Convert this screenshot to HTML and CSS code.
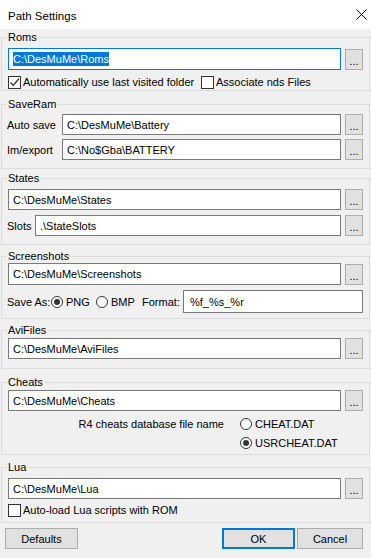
FILE: index.html
```html
<!DOCTYPE html>
<html lang="en">
<head>
    <meta charset="UTF-8">
    <title>Path Settings</title>
    <link rel="stylesheet" href="styles.css">
</head>
<body>

    <!-- Title bar -->
    <div class="titlebar">
        <span class="title">Path Settings</span>
        <svg class="close" width="11" height="11" viewBox="0 0 11 11">
            <path d="M0.5 0.5 L10.5 10.5 M10.5 0.5 L0.5 10.5" stroke="#000" stroke-width="1" fill="none"/>
        </svg>
    </div>

    <div class="dialog">

        <!-- Roms -->
        <fieldset class="group g-roms">
            <legend>Roms</legend>
            <div class="path-row">
                <div class="edit focused tall"><span class="sel">C:\DesMuMe\Roms</span></div>
                <button class="browse">...</button>
            </div>
            <div class="check-row">
                <label class="check first"><span class="box"><svg width="11" height="11" viewBox="0 0 11 11"><path d="M1.5 5.5 L4.2 8.3 L10 1.8" stroke="#333" stroke-width="1.3" fill="none"/></svg></span>Automatically use last visited folder</label>
                <label class="check"><span class="box"></span>Associate nds Files</label>
            </div>
        </fieldset>

        <!-- SaveRam -->
        <fieldset class="group g-saveram">
            <legend>SaveRam</legend>
            <div class="path-row">
                <span class="row-label w-save">Auto save</span>
                <div class="edit">C:\DesMuMe\Battery</div>
                <button class="browse">...</button>
            </div>
            <div class="path-row">
                <span class="row-label w-save">Im/export</span>
                <div class="edit">C:\No$Gba\BATTERY</div>
                <button class="browse">...</button>
            </div>
        </fieldset>

        <!-- States -->
        <fieldset class="group g-states">
            <legend>States</legend>
            <div class="path-row">
                <div class="edit">C:\DesMuMe\States</div>
                <button class="browse">...</button>
            </div>
            <div class="path-row">
                <span class="row-label w-slots">Slots</span>
                <div class="edit">.\StateSlots</div>
                <button class="browse">...</button>
            </div>
        </fieldset>

        <!-- Screenshots -->
        <fieldset class="group g-shots">
            <legend>Screenshots</legend>
            <div class="path-row">
                <div class="edit tall">C:\DesMuMe\Screenshots</div>
                <button class="browse">...</button>
            </div>
            <div class="format-row">
                <span class="save-as">Save As:</span>
                <label class="opt opt-png"><span class="radio on"><span class="dot"></span></span>PNG</label>
                <label class="opt opt-bmp"><span class="radio"></span>BMP</label>
                <span class="format-label">Format:</span>
                <div class="edit format">%f_%s_%r</div>
            </div>
        </fieldset>

        <!-- AviFiles -->
        <fieldset class="group g-avi">
            <legend>AviFiles</legend>
            <div class="path-row">
                <div class="edit">C:\DesMuMe\AviFiles</div>
                <button class="browse">...</button>
            </div>
        </fieldset>

        <!-- Cheats -->
        <fieldset class="group g-cheats">
            <legend>Cheats</legend>
            <div class="path-row">
                <div class="edit">C:\DesMuMe\Cheats</div>
                <button class="browse">...</button>
            </div>
            <div class="cheat-grid">
                <span class="cheat-text">R4 cheats database file name</span>
                <label class="opt"><span class="radio"></span>CHEAT.DAT</label>
                <span></span>
                <label class="opt"><span class="radio on"><span class="dot"></span></span>USRCHEAT.DAT</label>
            </div>
        </fieldset>

        <!-- Lua -->
        <fieldset class="group g-lua">
            <legend>Lua</legend>
            <div class="path-row">
                <div class="edit">C:\DesMuMe\Lua</div>
                <button class="browse">...</button>
            </div>
            <div class="check-row">
                <label class="check"><span class="box"></span>Auto-load Lua scripts with ROM</label>
            </div>
        </fieldset>

        <!-- Buttons -->
        <div class="buttons">
            <button class="btn">Defaults</button>
            <span class="spacer"></span>
            <button class="btn default">OK</button>
            <button class="btn cancel">Cancel</button>
        </div>

    </div>

</body>
</html>
```

FILE: styles.css
```css
/* General Styles */
* {
    margin: 0;
    padding: 0;
    box-sizing: border-box;
    font-family: "Liberation Sans", Arial, sans-serif;
}
body {
    width: 371px;
    height: 558px;
    background: #f0f0f0;
    color: #000;
    font-size: 11px;
    overflow: hidden;
}

/* Title bar */
.titlebar {
    height: 29px;
    background: #fff;
    display: flex;
    align-items: center;
    justify-content: space-between;
    padding: 0 4px 0 8px;
}
.title {
    font-size: 11.5px;
    padding-top: 2px;
}

/* Group boxes */
.dialog {
    padding: 0 1px;
}
.group {
    border: 1px solid #dcdcdc;
    margin: 0;
    min-width: 0;
    padding: 0 6px;
}
.group legend {
    line-height: 14px;
    padding: 0 1px;
    margin-left: -1px;
}
.g-roms { margin-top: 1px; padding-top: 4px; padding-bottom: 0; }
.g-saveram { margin-top: 6px; padding-top: 3px; padding-bottom: 8px; }
.g-states { margin-top: 2px; padding-top: 4px; padding-bottom: 8px; }
.g-shots { margin-top: 4px; padding-top: 0; padding-bottom: 5px; }
.g-avi { margin-top: 4px; padding-top: 1px; padding-bottom: 9px; }
.g-cheats { margin-top: 6px; padding-top: 1px; padding-bottom: 3px; }
.g-lua { margin-top: 5px; padding-top: 4px; padding-bottom: 4px; }

.g-saveram .path-row + .path-row { margin-top: 4px; }
.g-states .path-row + .path-row { margin-top: 5px; }
.g-roms .check-row { margin-top: 4px; }
.g-lua .check-row { margin-top: 3px; }

/* Path rows */
.path-row {
    display: flex;
    align-items: center;
    gap: 4px;
}
.row-label {
    flex: none;
    margin-left: -1px;
}
.w-save { width: 51px; }
.w-slots { width: 24px; }

.edit {
    flex: 1;
    height: 21px;
    background: #fff;
    border: 1px solid #7a7a7a;
    padding: 0 4px;
    display: flex;
    align-items: center;
    white-space: nowrap;
    overflow: hidden;
}
.edit.tall { height: 22px; }
.edit.focused { border-color: #0078d7; }
.sel {
    background: #0078d7;
    color: #fff;
    line-height: 14px;
}

.browse {
    flex: none;
    width: 18px;
    height: 21px;
    background: #e1e1e1;
    border: 1px solid #adadad;
    font-size: 11px;
    line-height: 14px;
    padding-top: 3px;
    color: #000;
}

/* Checkboxes */
.check-row {
    display: flex;
    height: 16px;
    align-items: center;
}
.check {
    display: flex;
    align-items: center;
    gap: 2px;
}
.check.first { width: 193px; }
.box {
    width: 13px;
    height: 13px;
    border: 1px solid #333;
    background: #fff;
    display: flex;
    align-items: center;
    justify-content: center;
}

/* Radios */
.opt {
    display: flex;
    align-items: center;
    gap: 3px;
}
.radio {
    width: 12px;
    height: 12px;
    border: 1px solid #333;
    border-radius: 50%;
    background: #fff;
    display: flex;
    align-items: center;
    justify-content: center;
}
.dot {
    width: 6px;
    height: 6px;
    border-radius: 50%;
    background: #333;
}

/* Screenshot format row */
.format-row {
    display: flex;
    align-items: center;
    margin-top: 5px;
}
.save-as { width: 44px; margin-left: -1px; }
.opt-png { width: 45px; }
.opt-bmp { width: 46px; }
.format-label { width: 41px; }
.edit.format {
    height: 23px;
    padding-left: 6px;
}

/* Cheats radios */
.cheat-grid {
    display: grid;
    grid-template-columns: 216px 1fr;
    column-gap: 16px;
    row-gap: 3px;
    margin-top: 5px;
}
.cheat-grid > * { height: 16px; }
.cheat-text {
    justify-self: end;
    line-height: 16px;
}

/* Dialog buttons */
.buttons {
    display: flex;
    margin: 5px 7px 0 4px;
    gap: 2px;
}
.spacer { flex: 1; }
.btn {
    width: 73px;
    height: 21px;
    background: #e1e1e1;
    border: 1px solid #adadad;
    font-size: 11px;
    color: #000;
}
.btn.cancel { width: 66px; }
.btn.default {
    border: 2px solid #0078d7;
}
```
